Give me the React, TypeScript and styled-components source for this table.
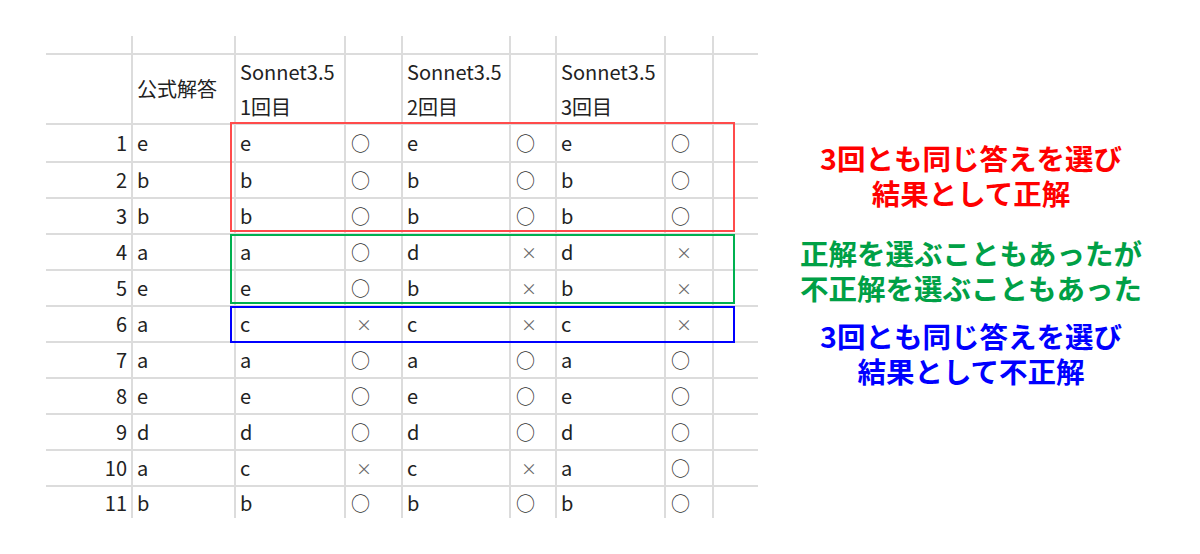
import React from "react";
import styled, { createGlobalStyle } from "styled-components";

const GlobalStyle = createGlobalStyle`
  html, body {
    margin: 0;
    padding: 0;
    background: #ffffff;
  }
  body {
    font-family: "Noto Sans CJK JP", "Noto Sans", sans-serif;
  }
`;

const Page = styled.div`
  width: 1200px;
  height: 554px;
  box-sizing: border-box;
  padding: 36px 16px 0 46px;
  display: flex;
  align-items: flex-start;
  overflow: hidden;
`;

const Sheet = styled.div`
  position: relative;
  display: grid;
  grid-template-columns: 85px 101px 108px 55px 106px 44px 107px 46px 44px;
  grid-template-rows: 17px 68px 36px repeat(9, 34px) 31px;
  gap: 2px;
  background: #dcdcdc;
`;

const Cell = styled.div<{ $right?: boolean }>`
  background: #ffffff;
  display: flex;
  align-items: center;
  justify-content: ${(p) => (p.$right ? "flex-end" : "flex-start")};
  padding: ${(p) => (p.$right ? "0 4px 0 0" : "0 0 0 4px")};
  font-size: 20px;
  line-height: 24px;
  color: #222222;
  white-space: nowrap;
  overflow: visible;
`;

const HeaderText = styled.div`
  font-size: 20px;
  line-height: 35px;
  color: #222222;
`;

const Mark = styled.span<{ $cross?: boolean }>`
  font-size: ${(p) => (p.$cross ? "16px" : "19px")};
  color: ${(p) => (p.$cross ? "#6a6a6a" : "#333333")};
  margin-left: ${(p) => (p.$cross ? "6px" : "1px")};
`;

const Frame = styled.div<{ $color: string; $top: number; $height: number }>`
  position: absolute;
  left: 184px;
  width: 505px;
  top: ${(p) => p.$top}px;
  height: ${(p) => p.$height}px;
  border: 2px solid ${(p) => p.$color};
  box-sizing: border-box;
  pointer-events: none;
`;

const Notes = styled.div`
  flex: 1;
  display: flex;
  flex-direction: column;
  align-items: center;
  padding-top: 104px;
`;

const Note = styled.div<{ $color: string; $gap: number }>`
  margin-top: ${(p) => p.$gap}px;
  color: ${(p) => p.$color};
  display: flex;
  flex-direction: column;
  align-items: center;
`;

const NoteLine = styled.div`
  font-family: "Noto Sans CJK JP", "Noto Sans", sans-serif;
  font-weight: 700;
  font-size: 28.5px;
  line-height: 35px;
  height: 35px;
  white-space: nowrap;
`;

type Row = [number, string, string, string, string, string, string, string];

const rows: Row[] = [
  [1, "e", "e", "○", "e", "○", "e", "○"],
  [2, "b", "b", "○", "b", "○", "b", "○"],
  [3, "b", "b", "○", "b", "○", "b", "○"],
  [4, "a", "a", "○", "d", "×", "d", "×"],
  [5, "e", "e", "○", "b", "×", "b", "×"],
  [6, "a", "c", "×", "c", "×", "c", "×"],
  [7, "a", "a", "○", "a", "○", "a", "○"],
  [8, "e", "e", "○", "e", "○", "e", "○"],
  [9, "d", "d", "○", "d", "○", "d", "○"],
  [10, "a", "c", "×", "c", "×", "a", "○"],
  [11, "b", "b", "○", "b", "○", "b", "○"],
];

const MarkCell = ({ v }: { v: string }) => (
  <Cell>
    <Mark $cross={v === "×"}>{v}</Mark>
  </Cell>
);

const notes = [
  { color: "#ff0000", gap: 0, lines: ["3回とも同じ答えを選び", "結果として正解"] },
  { color: "#00a046", gap: 25, lines: ["正解を選ぶこともあったが", "不正解を選ぶこともあった"] },
  { color: "#0000ff", gap: 13, lines: ["3回とも同じ答えを選び", "結果として不正解"] },
];

export default function App() {
  return (
    <>
      <GlobalStyle />
      <Page>
        <Sheet>
          {Array.from({ length: 9 }).map((_, i) => (
            <Cell key={`top-${i}`} />
          ))}
          <Cell />
          <Cell>公式解答</Cell>
          {[1, 2, 3].map((n) => (
            <React.Fragment key={n}>
              <Cell>
                <div>
                  <HeaderText>Sonnet3.5</HeaderText>
                  <HeaderText>{n}回目</HeaderText>
                </div>
              </Cell>
              <Cell />
            </React.Fragment>
          ))}
          <Cell />
          {rows.map((r) => (
            <React.Fragment key={r[0]}>
              <Cell $right>{r[0]}</Cell>
              <Cell>{r[1]}</Cell>
              <Cell>{r[2]}</Cell>
              <MarkCell v={r[3]} />
              <Cell>{r[4]}</Cell>
              <MarkCell v={r[5]} />
              <Cell>{r[6]}</Cell>
              <MarkCell v={r[7]} />
              <Cell />
            </React.Fragment>
          ))}
          <Frame $color="#ff4b4b" $top={86} $height={110} />
          <Frame $color="#00b050" $top={198} $height={70} />
          <Frame $color="#0000ff" $top={270} $height={37} />
        </Sheet>
        <Notes>
          {notes.map((n, i) => (
            <Note key={i} $color={n.color} $gap={n.gap}>
              {n.lines.map((l) => (
                <NoteLine key={l}>{l}</NoteLine>
              ))}
            </Note>
          ))}
        </Notes>
      </Page>
    </>
  );
}
